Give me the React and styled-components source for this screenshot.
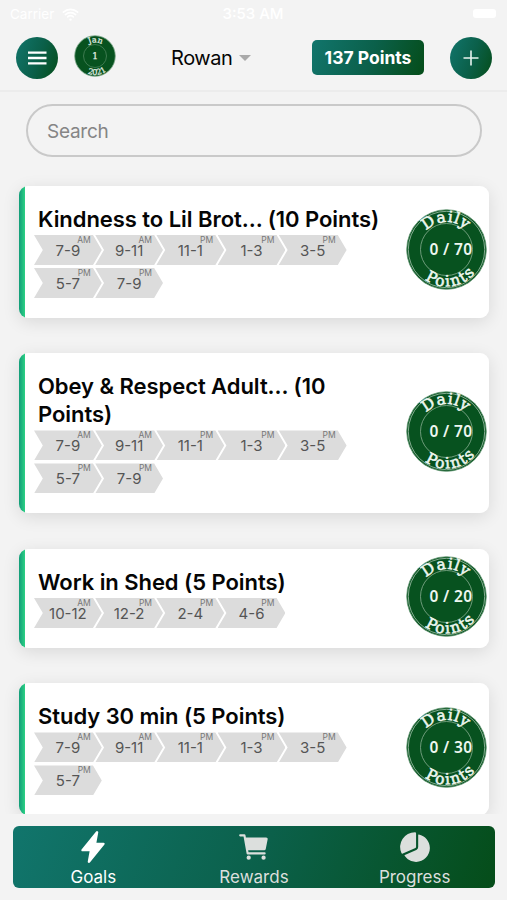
import React, { useState } from 'react';
import styled, { createGlobalStyle, css } from 'styled-components';
import { IoFlash, IoCart, IoPieChart, IoWifi } from 'react-icons/io5';

const GlobalStyle = createGlobalStyle`
  * {
    box-sizing: border-box;
  }

  body {
    margin: 0;
    background: #f3f3f3;
    font-family: Inter, "Liberation Sans", sans-serif;
    color: #050505;
  }
`;

const greenGradient = css`
  background: linear-gradient(110deg, #11756c 0%, #0b604a 52%, #054d19 100%);
`;

const Screen = styled.div`
  display: flex;
  flex-direction: column;
  height: 900px;
  overflow: hidden;
`;

const StatusBar = styled.div`
  display: grid;
  grid-template-columns: 1fr auto 1fr;
  align-items: center;
  height: 28px;
  padding: 0 11px 0 10px;
  color: #fff;
  font-size: 15px;
  line-height: 28px;
`;

const Carrier = styled.div`
  display: flex;
  align-items: center;
  gap: 7px;
  font-size: 13.5px;
`;

const Clock = styled.div`
  font-weight: 500;
`;

const Battery = styled.div`
  justify-self: end;
  width: 23px;
  height: 9px;
  margin-bottom: 2px;
  border-radius: 3px;
  background: #fff;
`;

const Header = styled.header`
  display: flex;
  align-items: center;
  height: 64px;
  padding: 0 15px 3px 16px;
  border-bottom: 2px solid #ececec;
`;

const RoundButton = styled.button`
  display: flex;
  align-items: center;
  justify-content: center;
  flex: none;
  width: 42px;
  height: 42px;
  padding: 0;
  border: none;
  border-radius: 50%;
  ${greenGradient}
`;

const DateBadge = styled.svg`
  flex: none;
  width: 42px;
  height: 42px;
  margin: 0 55px 4px 16px;
`;

const UserSelect = styled.div`
  display: flex;
  align-items: center;
  gap: 7px;
  width: 141px;
  font-size: 20px;
  letter-spacing: -0.45px;
`;

const Caret = styled.div`
  border: 6px solid transparent;
  border-top: 6px solid #a9a9a9;
  border-bottom: none;
`;

const PointsTotal = styled.div`
  width: 112px;
  height: 35px;
  margin-right: auto;
  border-radius: 5px;
  color: #fff;
  font-size: 17.5px;
  font-weight: 700;
  line-height: 36px;
  text-align: center;
  white-space: nowrap;
  ${greenGradient}
`;

const Content = styled.main`
  height: 722px;
  padding: 12px 18px 0 19px;
  overflow: hidden;
`;

const SearchInput = styled.input`
  display: block;
  width: 456px;
  height: 53px;
  margin: 0 0 29px 7px;
  padding: 1px 19px 0;
  border: 2px solid #c9c9c9;
  border-radius: 27px;
  outline: none;
  background: transparent;
  font-family: inherit;
  font-size: 19px;
  letter-spacing: -0.25px;

  &::placeholder {
    color: #858585;
    opacity: 1;
  }
`;

const GoalList = styled.div`
  display: flex;
  flex-direction: column;
  gap: 35.7px;
`;

const Card = styled.article`
  display: flex;
  align-items: center;
  flex: none;
  padding-right: 2px;
  border-radius: 9px;
  background: linear-gradient(90deg, #139c79 0, #2bd184 6px, #fff 6.5px);
  box-shadow: 0 4px 17px rgba(0, 0, 0, 0.11);
`;

const CardBody = styled.div`
  flex: 1;
  padding: 19px 0 19.8px 15px;
`;

const CardTitle = styled.h2`
  width: 350px;
  margin: 0 0 2px 4px;
  font-size: 22px;
  font-weight: 600;
  letter-spacing: -0.05px;
  line-height: 28px;
`;

const Slots = styled.div`
  display: flex;
  flex-wrap: wrap;
  gap: 3px 0;
  width: 330px;
`;

const Slot = styled.div`
  position: relative;
  width: 67.8px;
  height: 30px;
  margin-right: -6.6px;
  background: #dcdcdc;
  clip-path: polygon(0 0, 87% 0, 100% 50%, 87% 100%, 0 100%, 13% 50%);
  color: #555;
  font-size: 15px;
  line-height: 31px;
  text-align: center;
`;

const Meridiem = styled.span`
  position: absolute;
  top: 0;
  right: 11px;
  color: #777;
  font-size: 8.5px;
  line-height: 11px;
`;

const DailyBadge = styled.svg`
  flex: none;
  width: 81px;
  height: 81px;
  margin-bottom: 4.4px;
  overflow: visible;
`;

const TabBar = styled.nav`
  display: grid;
  grid-template-columns: repeat(3, 1fr);
  height: 62px;
  margin: 12px 12px 12px 13px;
  border-radius: 6px;
  ${greenGradient}
`;

const Tab = styled.button`
  display: flex;
  flex-direction: column;
  align-items: center;
  padding: 4px 0 0;
  border: none;
  background: none;
  color: ${({ $active }) => ($active ? '#fff' : '#dcdfdd')};
  font-family: inherit;
  font-size: 17px;
  line-height: 24px;

  svg {
    flex: none;
    margin-bottom: 1px;
  }
`;

const goals = [
  {
    id: 1,
    title: 'Kindness to Lil Brot... (10 Points)',
    max: 70,
    slots: ['7-9 AM', '9-11 AM', '11-1 PM', '1-3 PM', '3-5 PM', '5-7 PM', '7-9 PM'],
  },
  {
    id: 2,
    title: 'Obey & Respect Adult... (10 Points)',
    max: 70,
    slots: ['7-9 AM', '9-11 AM', '11-1 PM', '1-3 PM', '3-5 PM', '5-7 PM', '7-9 PM'],
  },
  {
    id: 3,
    title: 'Work in Shed (5 Points)',
    max: 20,
    slots: ['10-12 AM', '12-2 PM', '2-4 PM', '4-6 PM'],
  },
  {
    id: 4,
    title: 'Study 30 min (5 Points)',
    max: 30,
    slots: ['7-9 AM', '9-11 AM', '11-1 PM', '1-3 PM', '3-5 PM', '5-7 PM'],
  },
];

const tabs = [
  { name: 'Goals', Icon: IoFlash },
  { name: 'Rewards', Icon: IoCart },
  { name: 'Progress', Icon: IoPieChart },
];

const SLAB = '"DejaVu Serif", "Liberation Serif", serif';

const GoalBadge = ({ id, max }) => (
  <DailyBadge viewBox="-40.5 -40.5 81 81">
    <defs>
      <path id={`top-${id}`} d="M-27.5 0A27.5 27.5 0 0 1 27.5 0" />
      <path id={`bottom-${id}`} d="M-37 0A37 37 0 0 0 37 0" />
    </defs>
    <circle r="39.8" fill="#07521f" stroke="#5f9470" strokeWidth="0.8" />
    <circle r="38.2" fill="none" stroke="#a5c4ad" strokeWidth="0.8" />
    <circle r="26" fill="none" stroke="#86ad91" strokeWidth="0.8" />
    <g
      fill="#eef7ef"
      stroke="#eef7ef"
      strokeWidth="0.55"
      fontFamily={SLAB}
      fontSize="15.5"
      textAnchor="middle"
    >
      <text letterSpacing="0.8">
        <textPath href={`#top-${id}`} startOffset="49.5%">Daily</textPath>
      </text>
      <text letterSpacing="1.5">
        <textPath href={`#bottom-${id}`} startOffset="54.5%">Points</textPath>
      </text>
    </g>
    <text
      x="4.5"
      y="5.2"
      fill="#eef7ef"
      fontFamily='"Noto Sans", sans-serif'
      fontWeight="600"
      fontSize="15.5"
      letterSpacing="0.4"
      textAnchor="middle"
    >
      0 / {max}
    </text>
  </DailyBadge>
);

const GoalCard = ({ goal }) => (
  <Card>
    <CardBody>
      <CardTitle>{goal.title}</CardTitle>
      <Slots>
        {goal.slots.map(slot => {
          const [hours, meridiem] = slot.split(' ');
          return (
            <Slot key={slot}>
              {hours}
              <Meridiem>{meridiem}</Meridiem>
            </Slot>
          );
        })}
      </Slots>
    </CardBody>
    <GoalBadge id={goal.id} max={goal.max} />
  </Card>
);

const App = () => {
  const [search, setSearch] = useState('');
  const [activeTab, setActiveTab] = useState('Goals');

  const filteredGoals = goals.filter(goal =>
    goal.title.toLowerCase().includes(search.toLowerCase())
  );

  return (
    <Screen>
      <GlobalStyle />
      <StatusBar>
        <Carrier>
          Carrier
          <IoWifi size={19} />
        </Carrier>
        <Clock>3:53 AM</Clock>
        <Battery />
      </StatusBar>

      <Header>
        <RoundButton aria-label="Menu">
          <svg width="20" height="14" stroke="#fff" strokeWidth="2.3">
            <path d="M1 1.7H19.5M1 7H19.5M1 12.3H19.5" />
          </svg>
        </RoundButton>
        <DateBadge viewBox="-21 -21 42 42">
          <defs>
            <path id="date-top" d="M-13.7 0A13.7 13.7 0 0 1 13.7 0" />
            <path id="date-bottom" d="M-19 0A19 19 0 0 0 19 0" />
          </defs>
          <circle r="20.3" fill="#07521f" stroke="#7fa98b" strokeWidth="0.8" />
          <circle r="11.5" fill="none" stroke="#548b64" strokeWidth="0.7" />
          <g
            fill="#e4f0e6"
            stroke="#e4f0e6"
            strokeWidth="0.25"
            fontFamily={SLAB}
            fontSize="8"
            textAnchor="middle"
          >
            <text>
              <textPath href="#date-top" startOffset="51%">Jan</textPath>
            </text>
            <text>
              <textPath href="#date-bottom" startOffset="54%">2021</textPath>
            </text>
            <text y="3.2" fontSize="9">1</text>
          </g>
        </DateBadge>
        <UserSelect>
          Rowan
          <Caret />
        </UserSelect>
        <PointsTotal>137 Points</PointsTotal>
        <RoundButton aria-label="Add goal">
          <svg width="16" height="16" stroke="#e8f3ee" strokeWidth="1.6">
            <path d="M0.5 8H15.5M8 0.5V15.5" />
          </svg>
        </RoundButton>
      </Header>

      <Content>
        <SearchInput
          type="text"
          placeholder="Search"
          value={search}
          onChange={e => setSearch(e.target.value)}
        />
        <GoalList>
          {filteredGoals.map(goal => (
            <GoalCard key={goal.id} goal={goal} />
          ))}
        </GoalList>
      </Content>

      <TabBar>
        {tabs.map(({ name, Icon }) => (
          <Tab key={name} $active={name === activeTab} onClick={() => setActiveTab(name)}>
            <Icon size={34} />
            {name}
          </Tab>
        ))}
      </TabBar>
    </Screen>
  );
};

export default App;
